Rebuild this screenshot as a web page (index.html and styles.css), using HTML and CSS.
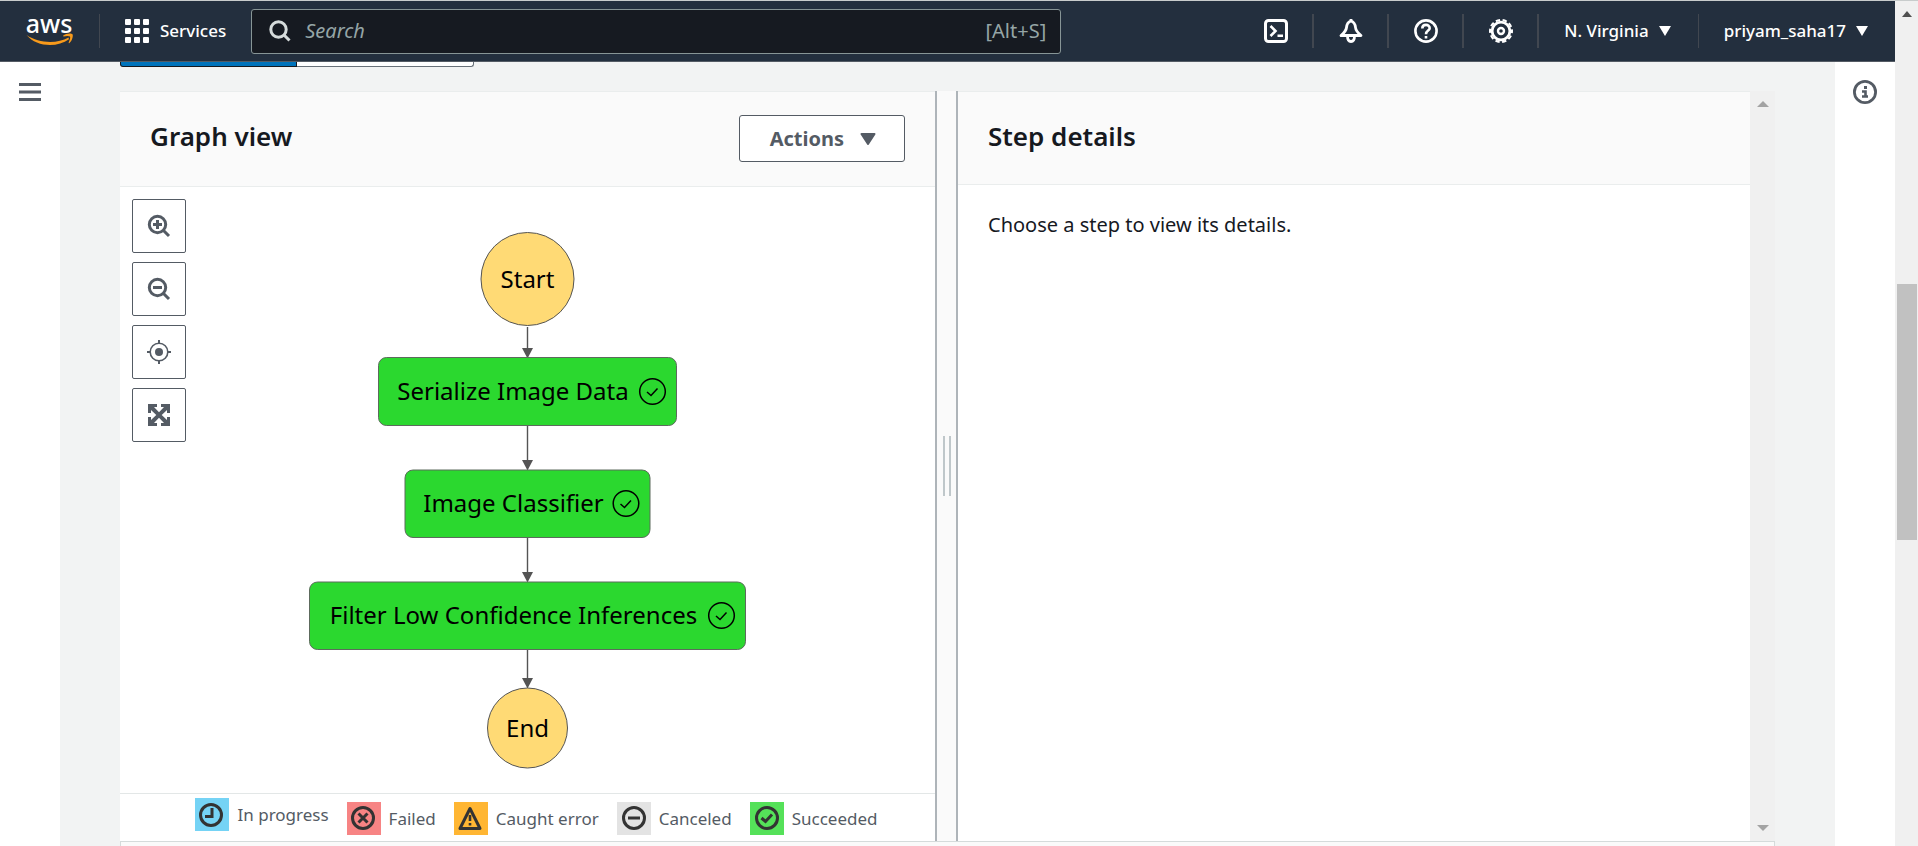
FILE: index.html
```html
<!DOCTYPE html>
<html lang="en">
<head>
<meta charset="utf-8">
<title>Step Functions - Execution</title>
<link rel="stylesheet" href="styles.css">
</head>
<body>
<div class="window">
  <div class="app">
    <header class="topbar">
      <a class="logo" href="#" aria-label="Console home">
        <svg width="48" height="52" viewBox="0 -9 48 52"><text class="logo-text" x="23" y="19" text-anchor="middle">aws</text>
          <path d="M0.500 21C13 29.500 31 30 42.500 23.500L43 25.200C31 34 10.500 33 0.500 21Z" fill="#f79a1b"/>
          <path d="M37 21.700C40 19 45.500 19 46.500 20.200C47.500 22 46 27 43.200 29.200C42.700 29.400 42.500 29 42.700 28.500C44 25.500 44.500 23.500 44 22.600C43 21.600 40 22 37.500 22.400Z" fill="#f79a1b"/>
        </svg>
      </a>
      <button class="services" type="button">
        <svg width="24" height="24" viewBox="0 0 24 24" fill="#fff"><rect width="6" height="6" rx="1"/><rect x="9" width="6" height="6" rx="1"/><rect x="18" width="6" height="6" rx="1"/><rect y="9" width="6" height="6" rx="1"/><rect x="9" y="9" width="6" height="6" rx="1"/><rect x="18" y="9" width="6" height="6" rx="1"/><rect y="18" width="6" height="6" rx="1"/><rect x="9" y="18" width="6" height="6" rx="1"/><rect x="18" y="18" width="6" height="6" rx="1"/></svg>
        Services
      </button>
      <label class="search">
        <svg width="22" height="22" viewBox="0 0 22 22" fill="none" stroke="#d5dbdb" stroke-width="3"><circle cx="9.500" cy="9.500" r="7.700"/><path d="M15 15L20.500 20.500"/></svg>
        <input type="search" placeholder="Search" aria-label="Search">
        <span class="hint">[Alt+S]</span>
      </label>
      <nav class="tools">
        <button class="tool" type="button" aria-label="CloudShell"><svg width="24" height="24" viewBox="0 0 24 24" fill="none" stroke="#fff" stroke-width="3"><rect x="1.500" y="1.500" width="21" height="21" rx="3"/><path d="M6.500 7L11.500 12L6.500 17M13.500 16.700H19" stroke-width="2.600"/></svg></button>
        <button class="tool" type="button" aria-label="Notifications"><svg width="24" height="24" viewBox="0 0 24 24" fill="none" stroke="#fff" stroke-width="2.800" stroke-linejoin="round"><path d="M12 2C8.500 3 7.800 5.500 7.500 8.500C7.200 12 5 14 2 16.500H22C19 14 16.800 12 16.500 8.500C16.200 5.500 15.500 3 12 2Z"/><path d="M12 0V3"/><path d="M8.500 17C8.500 24.300 15.500 24.300 15.500 17"/></svg></button>
        <button class="tool" type="button" aria-label="Support"><svg width="24" height="24" viewBox="0 0 24 24" fill="none" stroke="#fff" stroke-width="2.600"><circle cx="12" cy="12" r="10.600"/><path d="M8.300 9.500C8.300 4.700 15.700 4.700 15.700 9.200C15.700 11.700 12 11.600 12 15.200M12 17V19.600"/></svg></button>
        <button class="tool" type="button" aria-label="Settings"><svg width="24" height="24" viewBox="0 0 24 24" fill="none" stroke="#fff"><circle cx="12" cy="12" r="8.900" stroke-width="2.800"/><circle cx="12" cy="12" r="11" stroke-width="2" stroke-dasharray="4.320 2.592" stroke-dashoffset="2.160"/><circle cx="12" cy="12" r="3" stroke-width="2.400"/></svg></button>
        <button class="menu region" type="button">N. Virginia <svg width="12" height="10" viewBox="0 0 12 10"><path d="M0 0H12L6 10Z" fill="#fff"/></svg></button>
        <button class="menu account" type="button">priyam_saha17 <svg width="12" height="10" viewBox="0 0 12 10"><path d="M0 0H12L6 10Z" fill="#fff"/></svg></button>
      </nav>
    </header>
    <div class="body">
      <aside class="rail">
        <button class="plain" type="button" aria-label="Open navigation"><svg width="22" height="18" viewBox="0 0 22 18" fill="#545b64"><path d="M0 0H22V3H0ZM0 7.500H22V10.500H0ZM0 15H22V18H0Z"/></svg></button>
      </aside>
      <main class="content">
        <div class="tabs"><span class="tab tab-on"></span><span class="tab"></span></div>
        <div class="panels">
          <section class="graph">
            <div class="head head-graph">
              <h2>Graph view</h2>
              <button class="actions" type="button">Actions <svg width="16" height="12" viewBox="0 0 16 12"><path d="M1.500 1H14.500L8 11Z" fill="#545b64" stroke="#545b64" stroke-width="2" stroke-linejoin="round"/></svg></button>
            </div>
            <div class="canvas">
              <div class="zoom">
                <button type="button" aria-label="Zoom in"><svg width="24" height="24" viewBox="0 0 24 24" fill="none" stroke="#545b64" stroke-width="3"><circle cx="10.500" cy="10.500" r="8.200"/><path d="M16 16L22 22M10.500 6V15M6 10.500H15"/></svg></button>
                <button type="button" aria-label="Zoom out"><svg width="24" height="24" viewBox="0 0 24 24" fill="none" stroke="#545b64" stroke-width="3"><circle cx="10.500" cy="10.500" r="8.200"/><path d="M16 16L22 22M6 10.500H15"/></svg></button>
                <button type="button" aria-label="Center"><svg width="24" height="24" viewBox="0 0 24 24" fill="none" stroke="#545b64"><circle cx="12" cy="12" r="8.800" stroke-width="1.600"/><circle cx="12" cy="12" r="4" fill="#545b64" stroke="none"/><path d="M12 0V4M12 20V24M0 12H4M20 12H24" stroke-width="2"/></svg></button>
                <button type="button" aria-label="Full screen"><svg width="24" height="24" viewBox="0 0 24 24" fill="#545b64"><path d="M1 1H10V4H7L12 9.300L17 4H14V1H23V10H20V7L14.700 12L20 17V14H23V23H14V20H17L12 14.700L7 20H10V23H1V14H4V17L9.300 12L4 7V10H1Z"/></svg></button>
              </div>
              <svg class="flow" width="440" height="540" viewBox="0 0 440 540" role="img" aria-label="State machine graph">
                <g stroke="#545454" stroke-width="1.400"><path d="M219.500 95V122M219.500 193V234M219.500 306V346M219.500 418V452"/></g>
                <g fill="#545454"><path d="M214 116H225L219.500 126.500ZM214 228H225L219.500 238.500ZM214 340H225L219.500 350.500ZM214 446H225L219.500 456.500Z"/></g>
                <g stroke="#545454" fill="#ffda75"><circle cx="219.500" cy="47" r="46.500"/><circle cx="219.500" cy="496" r="40"/></g>
                <g stroke="#5d6b5d" fill="#2bd82f"><rect x="70.500" y="125.500" width="298" height="68" rx="8"/><rect x="97" y="238" width="245" height="67.500" rx="8"/><rect x="1.500" y="350" width="436" height="67.500" rx="8"/></g>
                <g class="names" text-anchor="middle"><text x="219.500" y="56">Start</text><text x="205" y="168">Serialize Image Data</text><text x="205.500" y="280">Image Classifier</text><text x="205.500" y="392">Filter Low Confidence Inferences</text><text x="219.500" y="505">End</text></g>
                <g fill="none" stroke="#000" stroke-width="1.500">
                  <circle cx="344.500" cy="159.500" r="12.800"/><path d="M339 160L343 163.500L349.500 156.500"/>
                  <circle cx="318" cy="271.500" r="12.800"/><path d="M312.500 272L316.500 275.500L323 268.500"/>
                  <circle cx="413.500" cy="383.500" r="12.800"/><path d="M408 384L412 387.500L418.500 380.500"/>
                </g>
              </svg>
            </div>
            <ul class="legend">
              <li class="first"><svg width="34" height="33" viewBox="0 0 34 33"><rect width="34" height="33" fill="#75d3f5"/><g fill="none" stroke="#333" stroke-width="3"><circle cx="16" cy="17" r="10.500"/><path d="M17 10V18.500H10" stroke-width="3"/></g></svg>In progress</li>
              <li><svg width="34" height="33" viewBox="0 0 34 33"><rect width="34" height="33" fill="#f78484"/><g fill="none" stroke="#333" stroke-width="3"><circle cx="16" cy="16" r="10.500"/><path d="M11.500 11.500L20.500 20.500M20.500 11.500L11.500 20.500"/></g></svg>Failed</li>
              <li><svg width="34" height="33" viewBox="0 0 34 33"><rect width="34" height="33" fill="#ffb633"/><g fill="none" stroke="#333" stroke-width="3"><path d="M16 6.500L26 26.500H6Z" stroke-linejoin="round"/><path d="M16 13V19M16 21V23.500" stroke-width="2.600"/></g></svg>Caught error</li>
              <li><svg width="34" height="33" viewBox="0 0 34 33"><rect width="34" height="33" fill="#e3e3e3"/><g fill="none" stroke="#333" stroke-width="3"><circle cx="17" cy="16" r="10.500"/><path d="M11 16H23"/></g></svg>Canceled</li>
              <li><svg width="34" height="33" viewBox="0 0 34 33"><rect width="34" height="33" fill="#55e159"/><g fill="none" stroke="#333" stroke-width="3"><circle cx="17" cy="16" r="10.500"/><path d="M11.500 16L15.500 19.500L22 12.500"/></g></svg>Succeeded</li>
            </ul>
          </section>
          <div class="splitter" role="separator"><span class="grip"></span></div>
          <section class="details">
            <div class="head"><h2>Step details</h2></div>
            <p>Choose a step to view its details.</p>
          </section>
          <div class="track">
            <svg width="12" height="6" viewBox="0 0 12 6"><path d="M0 6L6 0L12 6Z" fill="#a3a3a3"/></svg>
            <svg width="12" height="6" viewBox="0 0 12 6"><path d="M0 0H12L6 6Z" fill="#a3a3a3"/></svg>
          </div>
        </div>
        <div class="next-card"></div>
      </main>
      <aside class="rail">
        <button class="plain" type="button" aria-label="Info"><svg width="24" height="24" viewBox="0 0 24 24" fill="none" stroke="#545b64"><circle cx="12" cy="12" r="10.600" stroke-width="2.800"/><path d="M12.500 6V9" stroke-width="3"/><path d="M9 11.500H12.500V16.500M9 16.500H15" stroke-width="2.600"/></svg></button>
      </aside>
    </div>
  </div>
  <div class="page-track">
    <svg width="10" height="6" viewBox="0 0 10 6"><path d="M0 6L5 0L10 6Z" fill="#505050"/></svg>
    <span class="thumb"></span>
  </div>
</div>
</body>
</html>
```
FILE: styles.css
```css
* { box-sizing: border-box; }
body { margin: 0; font-family: "Noto Sans", "Open Sans", sans-serif; font-size: 20px; line-height: 28px; color: #16191f; }
button { font: inherit; color: inherit; background: none; border: 0; padding: 0; margin: 0; cursor: pointer; }
svg { display: block; flex: none; }
h2, p, ul { margin: 0; padding: 0; }
h2 { font-size: 26px; line-height: 32px; font-weight: 600; }

.window { display: flex; height: 100vh; overflow: hidden; border-top: 1px solid #c8cccc; }
.app { flex: 1; min-width: 0; display: flex; flex-direction: column; }

.topbar { display: flex; align-items: center; height: 61px; flex: none; background: #232f3e; border-bottom: 1px solid #545b64; color: #fff; font-size: 17px; font-weight: 500; }
.logo { display: flex; align-items: center; height: 34px; padding: 0 25px 0 26px; border-right: 1px solid #414750; text-decoration: none; }
.logo-text { font-size: 25px; font-weight: 500; fill: #fff; }
.services { display: flex; align-items: center; gap: 11px; padding: 0 25px; }
.search { display: flex; align-items: center; width: 810px; height: 45px; padding: 0 14px 0 17px; border: 1px solid #879596; border-radius: 3px; background: #161a21; color: #95a5a6; }
.search input { flex: 1; min-width: 0; margin-left: 14px; padding: 0; border: 0; outline: 0; background: none; font: inherit; font-size: 20px; font-weight: 400; color: #fff; }
.search input::placeholder { color: #95a5a6; font-style: italic; opacity: 1; }
.hint { font-size: 20px; font-weight: 400; }
.tools { display: flex; align-items: center; margin-left: auto; }
.tool { display: flex; align-items: center; height: 34px; padding: 0 24px 0 25px; border-right: 2px solid #414750; }
.menu { display: flex; align-items: center; gap: 10px; height: 34px; padding: 0 27px 0 25px; }
.region { border-right: 1px solid #414750; }

.body { flex: 1; min-height: 0; display: flex; }
.rail { width: 60px; flex: none; background: #fff; display: flex; justify-content: center; align-items: flex-start; padding-top: 18px; }
.plain { display: flex; align-items: center; height: 24px; }
.content { flex: 1; min-width: 0; display: flex; flex-direction: column; padding: 0 60px; background: #f2f3f3; }
.tabs { display: flex; height: 5px; flex: none; margin-bottom: 24px; }
.tab { width: 177px; background: #fff; border: 1px solid #687078; border-top: 0; border-left: 0; border-radius: 0 0 3px 0; }
.tab-on { background: #0073bb; border-color: #16191f; border-left: 1px solid #16191f; border-radius: 0 0 0 3px; }

.panels { flex: 1; min-height: 0; display: flex; }
.graph { flex: 815 1 0; min-width: 0; display: flex; flex-direction: column; background: #fff; }
.details { flex: 792 1 0; min-width: 0; background: #fff; }
.head { display: flex; align-items: flex-start; height: 94px; padding: 28px 30px 0; background: #fafafa; border-top: 1px solid #eaeded; border-bottom: 1px solid #eaeded; }
.head-graph { height: 96px; flex: none; justify-content: space-between; padding-top: 23px; }
.head-graph h2 { padding-top: 5px; }
.actions { display: flex; align-items: center; gap: 16px; height: 47px; padding: 0 28px 0 30px; border: 1px solid #545b64; border-radius: 3px; background: #fff; color: #545b64; font-size: 20px; font-weight: 700; }
.details p { padding: 26px 30px; }

.canvas { flex: 1; min-height: 0; position: relative; display: flex; justify-content: center; padding-top: 45px; }
.zoom { position: absolute; left: 12px; top: 12px; display: flex; flex-direction: column; gap: 9px; }
.zoom button { display: flex; align-items: center; justify-content: center; width: 54px; height: 54px; border: 1px solid #545b64; border-radius: 2px; background: #fff; }
.names { font-size: 24px; fill: #000; }
.legend { display: flex; justify-content: center; gap: 18px; height: 48px; flex: none; padding: 8px 0 0 18px; border-top: 1px solid #e3e7e7; list-style: none; color: #545b64; font-size: 17px; }
.legend li { display: flex; align-items: center; gap: 8px; height: 33px; }
.legend .first { margin-top: -4px; }

.splitter { width: 23px; flex: none; display: flex; align-items: center; justify-content: center; background: #fafafa; border: solid #aeb4b9; border-width: 0 2px; }
.grip { width: 8px; height: 60px; border: solid #bfc7ca; border-width: 0 2px; }
.track { width: 25px; flex: none; display: flex; flex-direction: column; justify-content: space-between; align-items: center; padding: 10px 0; background: #f0f0f0; }
.next-card { height: 5px; flex: none; border: 1px solid #d5dbdb; border-bottom: 0; background: #fafafa; }

.page-track { width: 23px; flex: none; display: flex; flex-direction: column; align-items: center; padding-top: 10px; background: #f0f0f0; }
.thumb { width: 20px; height: 256px; margin-top: 267px; background: #c1c1c1; }
```
